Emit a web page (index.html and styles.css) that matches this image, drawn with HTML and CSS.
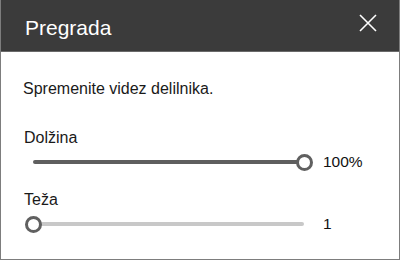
FILE: index.html
```html
<!DOCTYPE html>
<html lang="sl">
<head>
    <meta charset="UTF-8">
    <title>Pregrada</title>
    <link rel="stylesheet" href="styles.css">
</head>
<body>
    <div class="panel">
        <div class="header">
            <h1>Pregrada</h1>
            <button class="close" aria-label="Zapri">
                <svg width="18" height="18" viewBox="0 0 18 18"><path d="M1 1 L17 17 M17 1 L1 17" stroke="#fff" stroke-width="1.6" fill="none"/></svg>
            </button>
        </div>
        <div class="content">
            <p class="intro">Spremenite videz delilnika.</p>
            <div class="field">
                <label>Dolžina</label>
                <div class="row">
                    <div class="slider">
                        <div class="track dark"></div>
                        <div class="thumb" style="left: 100%"></div>
                    </div>
                    <span class="value">100%</span>
                </div>
            </div>
            <div class="field">
                <label>Teža</label>
                <div class="row">
                    <div class="slider">
                        <div class="track light"></div>
                        <div class="thumb" style="left: 0%"></div>
                    </div>
                    <span class="value">1</span>
                </div>
            </div>
        </div>
    </div>
</body>
</html>
```

FILE: styles.css
```css
body { margin: 0; font-family: "Liberation Sans", Arial, sans-serif; background: #fff; color: #1a1a1a; }
.panel { width: 400px; height: 260px; box-sizing: border-box; border: 1px solid #7d7d7d; border-top: none; display: flex; flex-direction: column; }
.header { height: 52px; background: #3b3b3b; border-bottom: 1px solid #6a6a6a; display: flex; align-items: center; justify-content: space-between; padding: 0 22px 0 24px; box-sizing: border-box; flex-shrink: 0; }
.header h1 { margin: 0; font-size: 21px; font-weight: 400; color: #fff; padding-top: 4px; }
.close { background: none; border: none; padding: 0; width: 18px; height: 18px; margin-top: -5px; cursor: pointer; }
.close svg { display: block; }
.content { padding: 27px 22px 0 22px; }
.intro { margin: 0 0 29px; font-size: 16px; line-height: 20px; }
.field label { display: block; font-size: 16px; line-height: 20px; padding-left: 1px; }
.field + .field { margin-top: 14px; }
.row { display: flex; align-items: center; height: 28px; }
.slider { position: relative; width: 271px; height: 17px; margin: 0 19px 0 10px; display: flex; align-items: center; }
.track { height: 4px; width: 100%; border-radius: 2px; }
.track.dark { background: #5f5f5f; }
.track.light { background: #c8c8c8; }
.thumb { position: absolute; top: 0; width: 17px; height: 17px; box-sizing: border-box; border: 3px solid #606060; border-radius: 50%; background: #fff; margin-left: -8.5px; }
.value { font-size: 15.5px; color: #111; }
```
